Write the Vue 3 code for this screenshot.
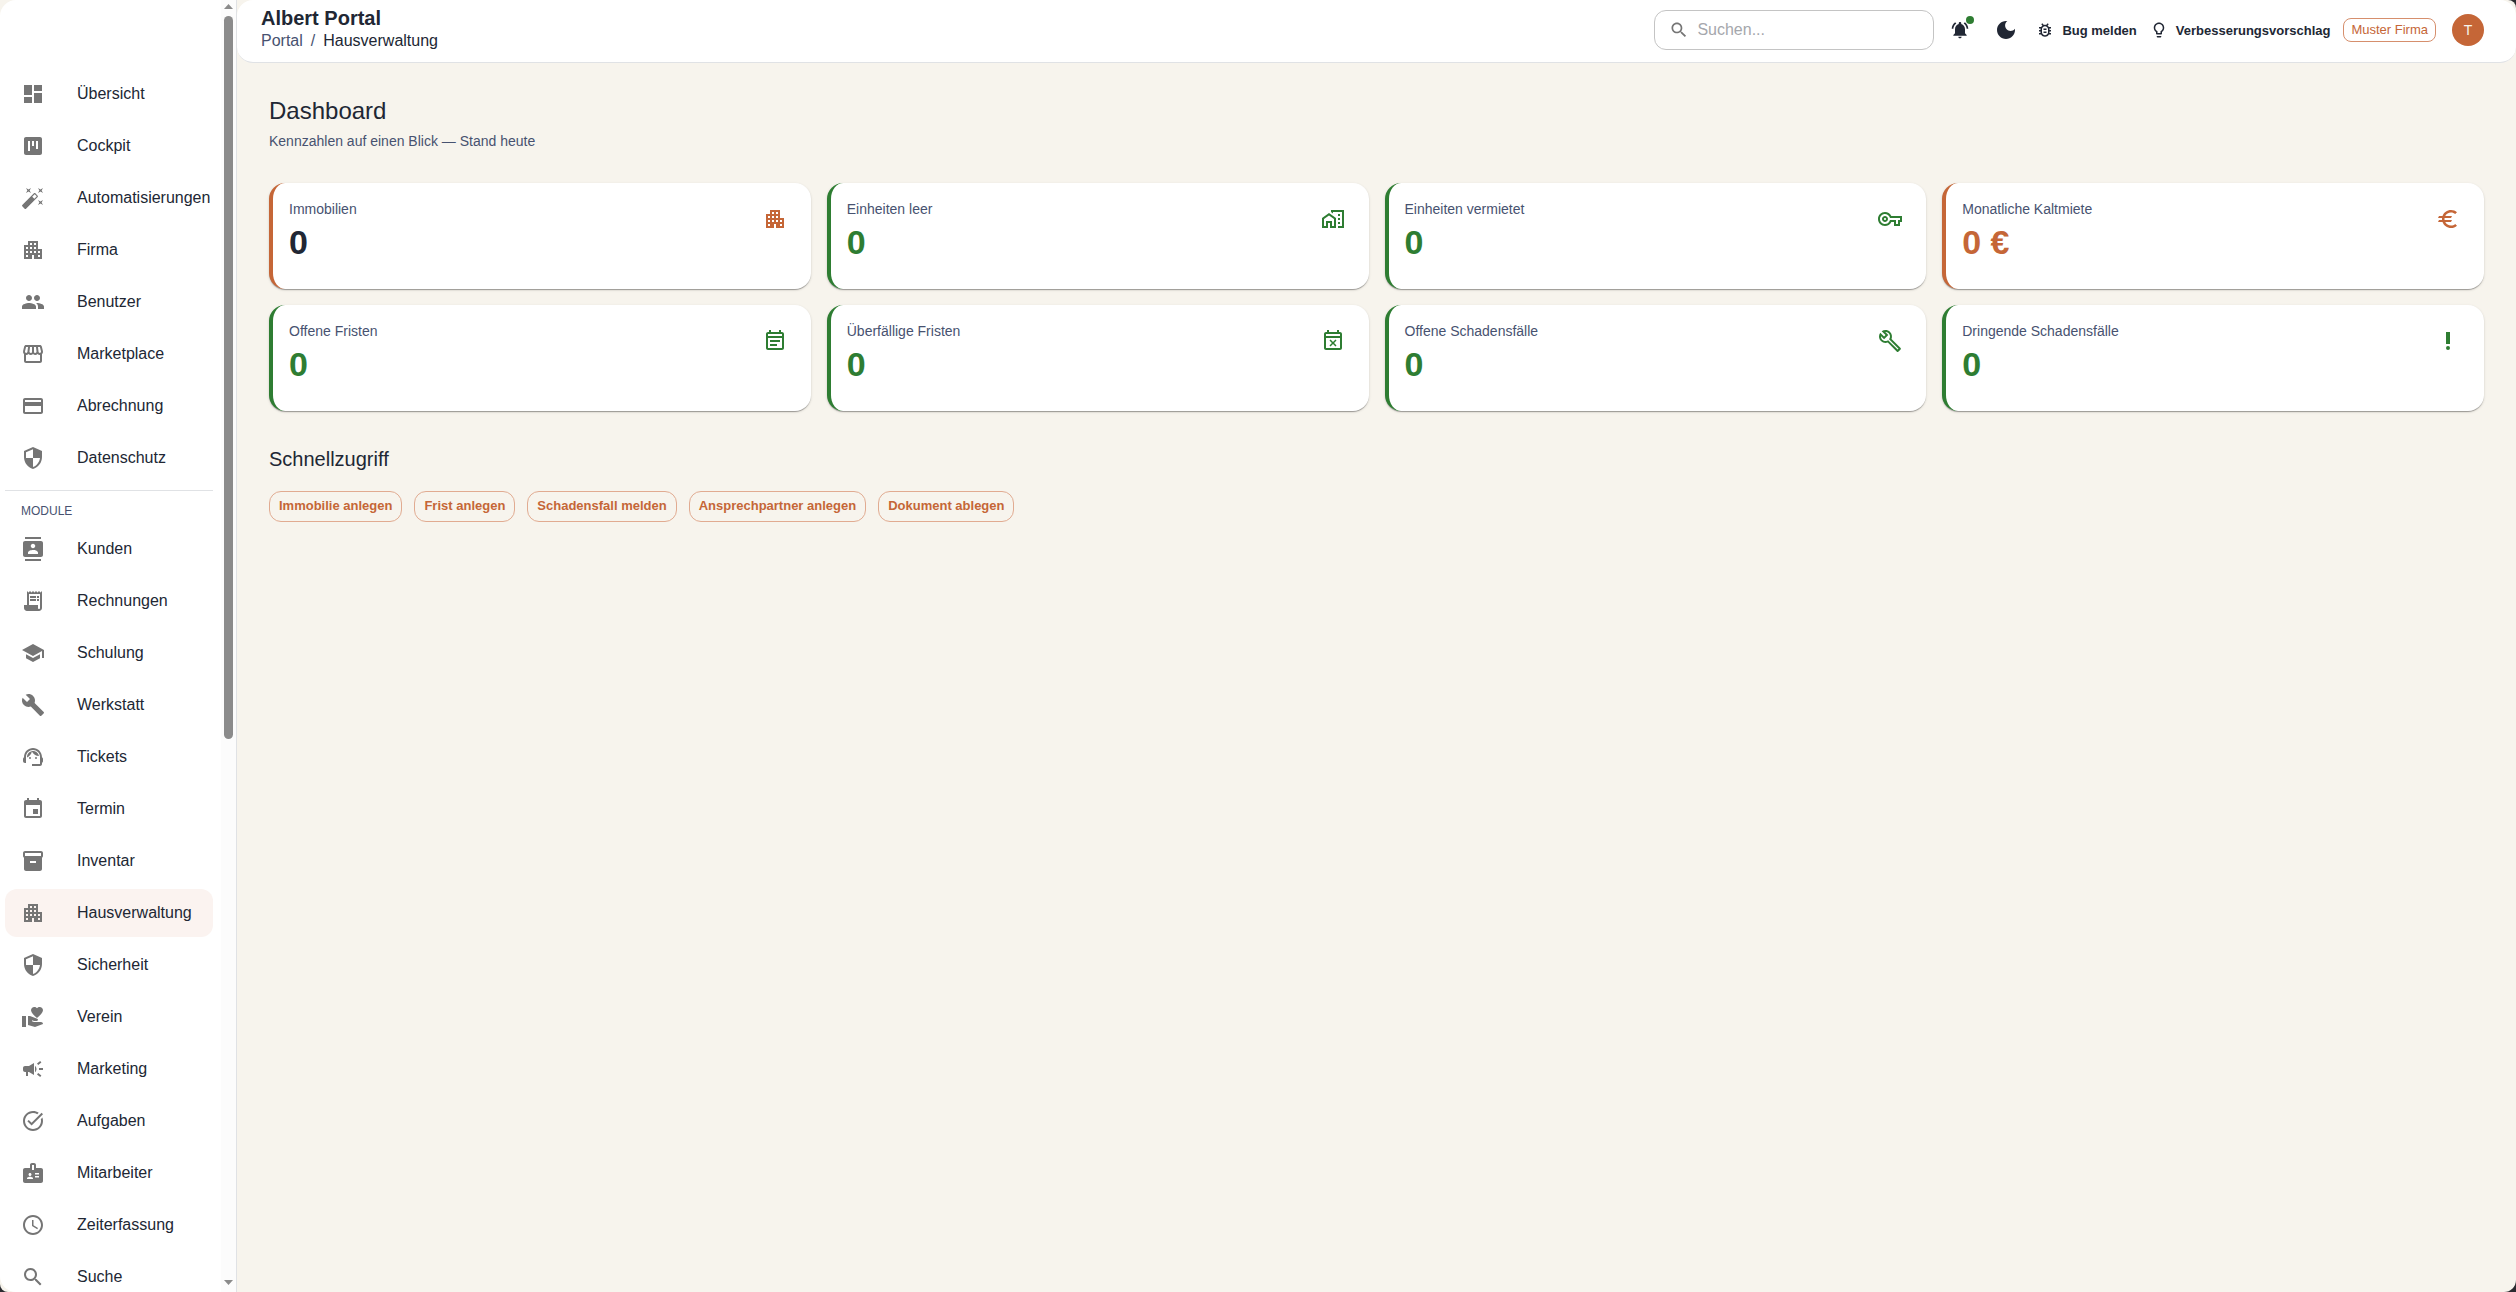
<script setup>
import { ref } from 'vue';

const icons = {
    dashboard: 'M3 13h8V3H3v10zm0 8h8v-6H3v6zm10 0h8V11h-8v10zm0-18v6h8V3h-8z',
    cockpit: 'M19 3H5c-1.1 0-2 .9-2 2v14c0 1.1.9 2 2 2h14c1.1 0 2-.9 2-2V5c0-1.1-.9-2-2-2zM9 17H7V7h2v10zm4-5h-2V7h2v5zm4 3h-2V7h2v8z',
    wand: 'M7.5 5.6 10 7 8.6 4.5 10 2 7.5 3.4 5 2l1.4 2.5L5 7zm12 9.8L17 14l1.4 2.5L17 19l2.5-1.4L22 19l-1.4-2.5L22 14zM22 2l-2.5 1.4L17 2l1.4 2.5L17 7l2.5-1.4L22 7l-1.4-2.5zm-7.63 5.29c-.39-.39-1.02-.39-1.41 0L1.29 18.96c-.39.39-.39 1.02 0 1.41l2.34 2.34c.39.39 1.02.39 1.41 0L16.7 11.05c.39-.39.39-1.02 0-1.41l-2.33-2.35zm-1.03 5.49-2.12-2.12 2.44-2.44 2.12 2.12-2.44 2.44z',
    building: 'M17 11V3H7v4H3v14h8v-4h2v4h8V11h-4zM7 19H5v-2h2v2zm0-4H5v-2h2v2zm0-4H5V9h2v2zm4 4H9v-2h2v2zm0-4H9V9h2v2zm0-4H9V5h2v2zm4 8h-2v-2h2v2zm0-4h-2V9h2v2zm0-4h-2V5h2v2zm4 12h-2v-2h2v2zm0-4h-2v-2h2v2z',
    people: 'M16 11c1.66 0 2.99-1.34 2.99-3S17.66 5 16 5s-3 1.34-3 3 1.34 3 3 3zm-8 0c1.66 0 2.99-1.34 2.99-3S9.66 5 8 5 5 6.34 5 8s1.34 3 3 3zm0 2c-2.33 0-7 1.17-7 3.5V19h14v-2.5c0-2.33-4.67-3.5-7-3.5zm8 0c-.29 0-.62.02-.97.05 1.16.84 1.97 1.97 1.97 3.45V19h6v-2.5c0-2.33-4.67-3.5-7-3.5z',
    store: 'M21.9 8.89l-1.05-4.37c-.22-.9-1-1.52-1.91-1.52H5.05c-.9 0-1.69.63-1.9 1.52L2.1 8.89c-.24 1.02-.02 2.06.62 2.88.08.11.19.19.28.29V19c0 1.1.9 2 2 2h14c1.1 0 2-.9 2-2v-6.94c.09-.09.2-.18.28-.28.64-.82.87-1.87.62-2.89zm-2.99-3.9 1.05 4.37c.1.42.01.84-.25 1.17-.14.18-.44.47-.94.47-.61 0-1.14-.49-1.21-1.14L16.98 5l1.93-.01zM13 5h1.96l.54 4.52c.05.39-.07.78-.33 1.07-.22.26-.54.41-.95.41-.67 0-1.22-.59-1.22-1.31V5zM8.49 9.52 9.04 5H11v4.69c0 .72-.55 1.31-1.29 1.31-.34 0-.65-.15-.89-.41-.25-.29-.37-.68-.33-1.07zm-4.45-.16L5.05 5h1.97l-.58 4.86c-.08.65-.6 1.14-1.21 1.14-.49 0-.8-.29-.93-.47-.27-.32-.36-.75-.26-1.17zM5 19v-6.03c.08.01.15.03.23.03.87 0 1.66-.36 2.24-.95.6.6 1.4.95 2.31.95.87 0 1.65-.36 2.23-.93.59.57 1.39.93 2.29.93.84 0 1.64-.35 2.24-.95.58.59 1.37.95 2.24.95.08 0 .15-.02.23-.03V19H5z',
    card: 'M20 4H4c-1.11 0-1.99.89-1.99 2L2 18c0 1.11.89 2 2 2h16c1.11 0 2-.89 2-2V6c0-1.11-.89-2-2-2zm0 14H4v-6h16v6zm0-10H4V6h16v2z',
    shield: 'M12 1 3 5v6c0 5.55 3.84 10.74 9 12 5.16-1.26 9-6.45 9-12V5l-9-4zm0 10.99h7c-.53 4.12-3.28 7.79-7 8.94V12H5V6.3l7-3.11v8.8z',
    contacts: 'M20 0H4v2h16V0zM4 24h16v-2H4v2zM20 4H4c-1.1 0-2 .9-2 2v12c0 1.1.9 2 2 2h16c1.1 0 2-.9 2-2V6c0-1.1-.9-2-2-2zm-8 2.75c1.24 0 2.25 1.01 2.25 2.25s-1.01 2.25-2.25 2.25S9.75 10.24 9.75 9 10.76 6.75 12 6.75zM17 17H7v-1.5c0-1.67 3.33-2.5 5-2.5s5 .83 5 2.5V17z',
    receipt: 'M19.5 3.5 18 2l-1.5 1.5L15 2l-1.5 1.5L12 2l-1.5 1.5L9 2 7.5 3.5 6 2v14H3v3c0 1.66 1.34 3 3 3h12c1.66 0 3-1.34 3-3V2l-1.5 1.5zM19 19c0 .55-.45 1-1 1s-1-.45-1-1v-3H8V5h11v14zM9 7h6v2H9zm7 0h2v2h-2zm-7 3h6v2H9zm7 0h2v2h-2z',
    school: 'M5 13.18v4L12 21l7-3.82v-4L12 17l-7-3.82zM12 3 1 9l11 6 9-4.91V17h2V9L12 3z',
    wrench: 'm22.7 19-9.1-9.1c.9-2.3.4-5-1.5-6.9-2-2-5-2.4-7.4-1.3L9 6 6 9 1.6 4.7C.4 7.1.9 10.1 2.9 12.1c1.9 1.9 4.6 2.4 6.9 1.5l9.1 9.1c.4.4 1 .4 1.4 0l2.3-2.3c.5-.4.5-1.1.1-1.4z',
    support: 'M21 12.22C21 6.73 16.74 3 12 3c-4.69 0-9 3.65-9 9.28-.6.34-1 .98-1 1.72v2c0 1.1.9 2 2 2h1v-6.1c0-3.87 3.13-7 7-7s7 3.13 7 7V19h-8v2h8c1.1 0 2-.9 2-2v-1.22c.59-.31 1-.92 1-1.64v-2.3c0-.7-.41-1.31-1-1.62z M9 12a1 1 0 1 0 0 2 1 1 0 0 0 0-2z M15 12a1 1 0 1 0 0 2 1 1 0 0 0 0-2z M18 11.03C17.52 8.18 15.04 6 12.05 6c-3.03 0-6.29 2.51-6.03 6.45 2.47-1.01 4.33-3.21 4.86-5.89 1.31 2.63 4 4.44 7.12 4.47z',
    event: 'M17 12h-5v5h5v-5zM16 1v2H8V1H6v2H5c-1.11 0-1.99.9-1.99 2L3 19c0 1.1.89 2 2 2h14c1.1 0 2-.9 2-2V5c0-1.1-.9-2-2-2h-1V1h-2zm3 18H5V8h14v11z',
    inventory: 'M20 2H4c-1 0-2 .9-2 2v3.01c0 .72.43 1.34 1 1.69V20c0 1.1 1.1 2 2 2h14c.9 0 2-.9 2-2V8.7c.57-.35 1-.97 1-1.69V4c0-1.1-1-2-2-2zm-5 12H9v-2h6v2zm5-7H4V4h16v3z',
    volunteer: 'M1 11h4v11H1z M16 3.25C16.65 2.49 17.66 2 18.7 2 20.55 2 22 3.45 22 5.3c0 2.27-2.91 4.9-6 7.7-3.09-2.81-6-5.44-6-7.7C10 3.45 11.45 2 13.3 2c1.04 0 2.05.49 2.7 1.25z M20 17h-7l-2.09-.73.33-.94L13 16h2.82c.65 0 1.18-.53 1.18-1.18 0-.49-.31-.93-.77-1.11L8.97 11H7v9.02L14 22l8.01-3c-.01-1.1-.9-2-2.01-2z',
    campaign: 'M18 11v2h4v-2h-4zm-2 6.61c.96.71 2.21 1.65 3.2 2.39.4-.53.8-1.07 1.2-1.6-.99-.74-2.24-1.68-3.2-2.4-.4.54-.8 1.08-1.2 1.61zM20.4 5.6c-.4-.53-.8-1.07-1.2-1.6-.99.74-2.24 1.68-3.2 2.4.4.53.8 1.07 1.2 1.6.96-.72 2.21-1.65 3.2-2.4zM4 9c-1.1 0-2 .9-2 2v2c0 1.1.9 2 2 2h1v4h2v-4h1l5 3V6L8 9H4zm11.5 3c0-1.33-.58-2.53-1.5-3.35v6.69c.92-.81 1.5-2.01 1.5-3.34z',
    task: 'M22 5.18 10.59 16.6l-4.24-4.24 1.41-1.41 2.83 2.83 10-10L22 5.18zm-2.21 5.04c.13.57.21 1.17.21 1.78 0 4.42-3.58 8-8 8s-8-3.58-8-8 3.58-8 8-8c1.58 0 3.04.46 4.28 1.25l1.44-1.44C16.1 2.67 14.13 2 12 2 6.48 2 2 6.48 2 12s4.48 10 10 10 10-4.48 10-10c0-1.19-.22-2.33-.6-3.39l-1.61 1.61z',
    badge: 'M20 7h-5V4c0-1.1-.9-2-2-2h-2c-1.1 0-2 .9-2 2v3H4c-1.1 0-2 .9-2 2v11c0 1.1.9 2 2 2h16c1.1 0 2-.9 2-2V9c0-1.1-.9-2-2-2zM9 12c.83 0 1.5.67 1.5 1.5S9.83 15 9 15s-1.5-.67-1.5-1.5S8.17 12 9 12zm3 6H6v-.75c0-1 2-1.5 3-1.5s3 .5 3 1.5V18zm1-9h-2V4h2v5zm5 7.5h-4V15h4v1.5zm0-3h-4V12h4v1.5z',
    clock: 'M11.99 2C6.47 2 2 6.48 2 12s4.47 10 9.99 10C17.52 22 22 17.52 22 12S17.52 2 11.99 2zM12 20c-4.42 0-8-3.58-8-8s3.58-8 8-8 8 3.58 8 8-3.58 8-8 8zm.5-13H11v6l5.25 3.15.75-1.23-4.5-2.67z',
    search: 'M15.5 14h-.79l-.28-.27C15.41 12.59 16 11.11 16 9.5 16 5.91 13.09 3 9.5 3S3 5.91 3 9.5 5.91 16 9.5 16c1.61 0 3.09-.59 4.23-1.57l.27.28v.79l5 4.99L20.49 19l-4.99-5zm-6 0C7.01 14 5 11.99 5 9.5S7.01 5 9.5 5 14 7.01 14 9.5 11.99 14 9.5 14z',
    bell: 'M7.58 4.08 6.15 2.65C3.75 4.48 2.17 7.3 2.03 10.5h2c.15-2.65 1.51-4.97 3.55-6.42zm12.39 6.42h2c-.15-3.2-1.73-6.02-4.12-7.85l-1.42 1.43c2.02 1.45 3.39 3.77 3.54 6.42zM18 11c0-3.07-1.64-5.64-4.5-6.32V4c0-.83-.67-1.5-1.5-1.5s-1.5.67-1.5 1.5v.68C7.63 5.36 6 7.92 6 11v5l-2 2v1h16v-1l-2-2v-5zm-6 11c.14 0 .27-.01.4-.04.65-.14 1.18-.58 1.44-1.18.1-.24.15-.5.15-.78h-4c.01 1.1.9 2 2.01 2z',
    moon: 'M12 3c-4.97 0-9 4.03-9 9s4.03 9 9 9 9-4.03 9-9c0-.46-.04-.92-.1-1.36-.98 1.37-2.58 2.26-4.4 2.26-2.98 0-5.4-2.42-5.4-5.4 0-1.81.89-3.42 2.26-4.4-.44-.06-.9-.1-1.36-.1z',
    bug: 'M20 8h-2.81c-.45-.78-1.07-1.45-1.82-1.96L17 4.41 15.59 3l-2.17 2.17C12.96 5.06 12.49 5 12 5s-.96.06-1.41.17L8.41 3 7 4.41l1.62 1.63C7.88 6.55 7.26 7.22 6.81 8H4v2h2.09c-.05.33-.09.66-.09 1v1H4v2h2v1c0 .34.04.67.09 1H4v2h2.81c1.04 1.79 2.97 3 5.19 3s4.15-1.21 5.19-3H20v-2h-2.09c.05-.33.09-.66.09-1v-1h2v-2h-2v-1c0-.34-.04-.67-.09-1H20V8zm-4 7c0 2.21-1.79 4-4 4s-4-1.79-4-4v-4c0-2.21 1.79-4 4-4s4 1.79 4 4v4zm-6-1h4v2h-4zm0-4h4v2h-4z',
    bulb: 'M9 21c0 .55.45 1 1 1h4c.55 0 1-.45 1-1v-1H9v1zm3-19C8.14 2 5 5.14 5 9c0 2.38 1.19 4.47 3 5.74V17c0 .55.45 1 1 1h6c.55 0 1-.45 1-1v-2.26c1.81-1.27 3-3.36 3-5.74 0-3.86-3.14-7-7-7zm2.85 11.1-.85.6V16h-4v-2.3l-.85-.6C7.8 12.16 7 10.63 7 9c0-2.76 2.24-5 5-5s5 2.24 5 5c0 1.63-.8 3.16-2.15 4.1z',
    homework: 'M1 11v10h6v-5h2v5h6V11L8 6l-7 5zm12 8h-2v-5H5v5H3v-7l5-3.5 5 3.5v7z M17 7h2v2h-2V7z M17 11h2v2h-2v-2z M17 15h2v2h-2v-2z M10 3v1.97l2 1.43V5h9v14h-4v2h6V3H10z',
    key: 'M22 19h-6v-4h-2.68c-1.14 2.42-3.6 4-6.32 4-3.86 0-7-3.14-7-7s3.14-7 7-7c2.72 0 5.17 1.58 6.32 4H24v6h-2v4zm-4-2h2v-4h2v-2H11.94l-.23-.67C11.01 8.34 9.11 7 7 7c-2.76 0-5 2.24-5 5s2.24 5 5 5c2.11 0 4.01-1.34 4.71-3.33l.23-.67H18v4zM7 15c-1.65 0-3-1.35-3-3s1.35-3 3-3 3 1.35 3 3-1.35 3-3 3zm0-4c-.55 0-1 .45-1 1s.45 1 1 1 1-.45 1-1-.45-1-1-1z',
    euro: 'M15 18.5c-2.51 0-4.68-1.42-5.76-3.5H15l1-2H8.58c-.05-.33-.08-.66-.08-1s.03-.67.08-1H15l1-2H9.24C10.32 6.92 12.5 5.5 15 5.5c1.61 0 3.09.59 4.23 1.57L21 5.3C19.41 3.87 17.3 3 15 3c-3.92 0-7.24 2.51-8.48 6H3l-1 2h4.06c-.04.33-.06.66-.06 1s.02.67.06 1H3l-1 2h4.52c1.24 3.49 4.56 6 8.48 6 2.31 0 4.41-.87 6-2.3l-1.78-1.77c-1.13.98-2.6 1.57-4.22 1.57z',
    note: 'M19 3h-1V1h-2v2H8V1H6v2H5c-1.11 0-1.99.9-1.99 2L3 19c0 1.1.89 2 2 2h14c1.1 0 2-.9 2-2V5c0-1.1-.9-2-2-2zm0 16H5V9h14v10zm0-12H5V5h14v2zM7 11h10v2H7v-2zm0 4h7v2H7v-2z',
    busy: 'M9.56 17.5 12 15.06l2.44 2.44 1.06-1.06L13.06 14l2.44-2.44-1.06-1.06L12 12.94 9.56 10.5 8.5 11.56 10.94 14 8.5 16.44zM19 3h-1V1h-2v2H8V1H6v2H5c-1.11 0-1.99.9-1.99 2L3 19c0 1.1.89 2 2 2h14c1.1 0 2-.9 2-2V5c0-1.1-.9-2-2-2zm0 16H5V9h14v10zm0-12H5V5h14v2z',
    build: 'm22.61 18.99-9.08-9.08c.93-2.34.45-5.1-1.44-7C9.79.61 6.21.4 3.66 2.26L7.5 6.11 6.08 7.52 2.25 3.69C.39 6.23.6 9.82 2.9 12.11c1.86 1.86 4.57 2.35 6.89 1.48l9.11 9.11c.39.39 1.02.39 1.41 0l2.3-2.3c.4-.38.4-1.01 0-1.41zm-3 1.6-9.46-9.46c-.61.45-1.29.72-2 .82-1.36.2-2.79-.21-3.83-1.25C3.37 9.76 2.93 8.5 3 7.26l3.09 3.09 4.24-4.24-3.09-3.09c1.24-.07 2.49.37 3.44 1.31 1.08 1.08 1.49 2.57 1.24 3.96-.12.71-.42 1.37-.88 1.96l9.45 9.45-.88.89z',
    priority: 'M10 3h4v12h-4z M12 17a2 2 0 1 0 0 4 2 2 0 0 0 0-4z',
};

const mainMenu = [
    { label: 'Übersicht', icon: 'dashboard' },
    { label: 'Cockpit', icon: 'cockpit' },
    { label: 'Automatisierungen', icon: 'wand' },
    { label: 'Firma', icon: 'building' },
    { label: 'Benutzer', icon: 'people' },
    { label: 'Marketplace', icon: 'store' },
    { label: 'Abrechnung', icon: 'card' },
    { label: 'Datenschutz', icon: 'shield' },
];

const modules = [
    { label: 'Kunden', icon: 'contacts' },
    { label: 'Rechnungen', icon: 'receipt' },
    { label: 'Schulung', icon: 'school' },
    { label: 'Werkstatt', icon: 'wrench' },
    { label: 'Tickets', icon: 'support' },
    { label: 'Termin', icon: 'event' },
    { label: 'Inventar', icon: 'inventory' },
    { label: 'Hausverwaltung', icon: 'building', active: true },
    { label: 'Sicherheit', icon: 'shield' },
    { label: 'Verein', icon: 'volunteer' },
    { label: 'Marketing', icon: 'campaign' },
    { label: 'Aufgaben', icon: 'task' },
    { label: 'Mitarbeiter', icon: 'badge' },
    { label: 'Zeiterfassung', icon: 'clock' },
    { label: 'Suche', icon: 'search' },
];

const stats = [
    { label: 'Immobilien', value: '0', icon: 'building', tone: 'primary', plain: true },
    { label: 'Einheiten leer', value: '0', icon: 'homework', tone: 'success' },
    { label: 'Einheiten vermietet', value: '0', icon: 'key', tone: 'success' },
    { label: 'Monatliche Kaltmiete', value: '0 €', icon: 'euro', tone: 'primary' },
    { label: 'Offene Fristen', value: '0', icon: 'note', tone: 'success' },
    { label: 'Überfällige Fristen', value: '0', icon: 'busy', tone: 'success' },
    { label: 'Offene Schadensfälle', value: '0', icon: 'build', tone: 'success' },
    { label: 'Dringende Schadensfälle', value: '0', icon: 'priority', tone: 'success' },
];

const actions = ['Immobilie anlegen', 'Frist anlegen', 'Schadensfall melden', 'Ansprechpartner anlegen', 'Dokument ablegen'];

const query = ref('');
</script>
<template>
    <div class="layout">
        <aside class="sidebar">
            <nav class="menu">
                <a v-for="item in mainMenu" :key="item.label" href="#" class="menu-item">
                    <svg class="icon" viewBox="0 0 24 24"><path :d="icons[item.icon]" /></svg>
                    <span>{{ item.label }}</span>
                </a>
                <hr class="menu-divider">
                <div class="menu-caption">MODULE</div>
                <a v-for="item in modules" :key="item.label" href="#" class="menu-item" :class="{ active: item.active }">
                    <svg class="icon" viewBox="0 0 24 24"><path :d="icons[item.icon]" /></svg>
                    <span>{{ item.label }}</span>
                </a>
            </nav>
            <div class="scrollbar" aria-hidden="true">
                <svg class="scrollbar-arrow" viewBox="0 0 15 16"><path d="M3 9 7.500 4 12 9z" /></svg>
                <div class="scrollbar-thumb"></div>
                <div class="scrollbar-rest"></div>
                <svg class="scrollbar-arrow" viewBox="0 0 15 16"><path d="M3 4 7.500 9 12 4z" /></svg>
            </div>
        </aside>
        <div class="content">
            <header class="topbar">
                <div class="brand">
                    <div class="brand-name">Albert Portal</div>
                    <nav class="breadcrumbs">
                        <a href="#">Portal</a>
                        <span>/</span>
                        <span class="current">Hausverwaltung</span>
                    </nav>
                </div>
                <label class="search">
                    <svg class="icon icon-md" viewBox="0 0 24 24"><path :d="icons.search" /></svg>
                    <input v-model="query" type="text" placeholder="Suchen..." aria-label="Suchen">
                </label>
                <div class="tools">
                    <button type="button" class="icon-button" aria-label="Benachrichtigungen">
                        <svg class="icon icon-md" viewBox="0 0 24 24"><path :d="icons.bell" /></svg>
                        <span class="dot"></span>
                    </button>
                    <button type="button" class="icon-button" aria-label="Dunkelmodus">
                        <svg class="icon" viewBox="0 0 24 24"><path :d="icons.moon" /></svg>
                    </button>
                </div>
                <div class="links">
                    <button type="button" class="text-button">
                        <svg class="icon icon-sm" viewBox="0 0 24 24"><path :d="icons.bug" /></svg>
                        Bug melden
                    </button>
                    <button type="button" class="text-button">
                        <svg class="icon icon-sm" viewBox="0 0 24 24"><path :d="icons.bulb" /></svg>
                        Verbesserungsvorschlag
                    </button>
                </div>
                <span class="chip">Muster Firma</span>
                <button type="button" class="avatar">T</button>
            </header>
            <main class="page">
                <h1>Dashboard</h1>
                <p class="subtitle">Kennzahlen auf einen Blick — Stand heute</p>
                <section class="stats">
                    <article v-for="stat in stats" :key="stat.label" class="stat" :class="[stat.tone, { plain: stat.plain }]">
                        <div>
                            <div class="stat-label">{{ stat.label }}</div>
                            <div class="stat-value">{{ stat.value }}</div>
                        </div>
                        <svg class="icon stat-icon" viewBox="0 0 24 24"><path :d="icons[stat.icon]" /></svg>
                    </article>
                </section>
                <h2>Schnellzugriff</h2>
                <div class="actions">
                    <button v-for="action in actions" :key="action" type="button" class="action">{{ action }}</button>
                </div>
            </main>
        </div>
    </div>
</template>
<style>
html {
    background-color: #2b2b30;
}
</style>
<style scoped>
.layout {
    --text: #212734;
    --muted: #475270;
    --primary: #c56637;
    --success: #2e7d32;
    --line: #e0e2e5;
    display: flex;
    height: 100vh;
    overflow: hidden;
    background-color: #f7f4ed;
    border-radius: 0 8px 12px 8px;
    color: var(--text);
    font-family: "Liberation Sans", Arial, sans-serif;
    font-size: 16px;
    line-height: 24px;
}
.layout * {
    box-sizing: border-box;
}
button {
    font-family: inherit;
    color: inherit;
    background: none;
    border: 0;
    padding: 0;
    cursor: pointer;
}
a {
    color: inherit;
    text-decoration: none;
}
.icon {
    width: 24px;
    height: 24px;
    flex-shrink: 0;
    fill: currentColor;
}
.icon-md {
    width: 20px;
    height: 20px;
}
.icon-sm {
    width: 18px;
    height: 18px;
}

.sidebar {
    display: flex;
    width: 237px;
    flex-shrink: 0;
    overflow: hidden;
    background-color: #fff;
    border-right: 1px solid var(--line);
    border-radius: 16px 0 0 16px;
}
.menu {
    flex: 1;
    min-width: 0;
    padding: 70px 8px 0 5px;
}
.menu-item {
    display: flex;
    align-items: center;
    gap: 32px;
    height: 48px;
    margin-bottom: 4px;
    padding: 0 16px;
    border-radius: 12px;
    white-space: nowrap;
}
.menu-item .icon {
    color: #757575;
}
.menu-item.active {
    background-color: #fbf3f0;
}
.menu-divider {
    margin: 8px 0;
    border: 0;
    border-top: 1px solid var(--line);
}
.menu-caption {
    padding: 0 16px;
    margin-bottom: 2px;
    color: var(--muted);
    font-size: 12px;
}
.scrollbar {
    display: flex;
    flex-direction: column;
    width: 15px;
    background-color: #fcfcfc;
}
.scrollbar-arrow {
    height: 16px;
    fill: #8b8b8b;
}
.scrollbar-thumb {
    flex: 723;
    margin: 0 3px;
    border-radius: 5px;
    background-color: #8b8b8b;
}
.scrollbar-rest {
    flex: 537;
}

.content {
    flex: 1;
    min-width: 0;
}
.topbar {
    display: flex;
    align-items: center;
    height: 63px;
    padding: 0 32px 2px 24px;
    background-color: #fff;
    border-bottom: 1px solid var(--line);
    border-radius: 16px;
}
.brand {
    flex: 1;
}
.brand-name {
    font-size: 20px;
    font-weight: 700;
    line-height: 22px;
}
.breadcrumbs {
    display: flex;
    gap: 8px;
    color: var(--muted);
}
.breadcrumbs .current {
    color: var(--text);
}
.search {
    display: flex;
    align-items: center;
    gap: 8px;
    width: 280px;
    height: 40px;
    padding: 0 14px;
    border: 1px solid #c4c4c4;
    border-radius: 12px;
}
.search .icon {
    color: #757575;
}
.search input {
    flex: 1;
    min-width: 0;
    padding: 0;
    border: 0;
    outline: 0;
    background: none;
    color: inherit;
    font: inherit;
}
.search input::placeholder {
    color: #a5a7ac;
    opacity: 1;
}
.tools {
    display: flex;
    align-items: center;
    gap: 24px;
    margin: 0 18px 0 16px;
}
.icon-button {
    position: relative;
    display: flex;
}
.dot {
    position: absolute;
    top: -4px;
    right: -4px;
    width: 8px;
    height: 8px;
    border-radius: 50%;
    background-color: var(--success);
}
.links {
    display: flex;
    gap: 13px;
}
.text-button {
    display: flex;
    align-items: center;
    gap: 8px;
    font-size: 13px;
    font-weight: 700;
}
.chip {
    height: 24px;
    margin: 0 16px 0 13px;
    padding: 0 7px;
    border: 1px solid #d68f6d;
    border-radius: 8px;
    color: var(--primary);
    font-size: 13px;
    line-height: 22px;
}
.avatar {
    width: 32px;
    height: 32px;
    border-radius: 50%;
    background-color: var(--primary);
    color: #f7f4ed;
    font-size: 14px;
}

.page {
    padding: 32px;
}
h1 {
    margin: 0 0 4px;
    font-size: 24px;
    font-weight: 400;
    line-height: 32px;
}
.subtitle {
    margin: 0 0 32px;
    color: var(--muted);
    font-size: 14px;
    line-height: 20px;
}
.stats {
    display: grid;
    grid-template-columns: repeat(4, 1fr);
    gap: 16px;
}
.stat {
    --tone: var(--success);
    display: flex;
    justify-content: space-between;
    padding: 16px 16px 24px;
    background-color: #fff;
    border-left: 4px solid var(--tone);
    border-radius: 16px;
    box-shadow: 0 2px 1px -1px rgba(0, 0, 0, 0.2), 0 1px 1px rgba(0, 0, 0, 0.14), 0 1px 3px rgba(0, 0, 0, 0.12);
}
.stat.primary {
    --tone: var(--primary);
}
.stat-label {
    color: var(--muted);
    font-size: 14px;
    line-height: 20px;
}
.stat-value {
    margin: 2px 0;
    color: var(--tone);
    font-size: 34px;
    font-weight: 700;
    line-height: 42px;
}
.stat.plain .stat-value {
    color: var(--text);
}
.stat-icon {
    margin: 8px;
    color: var(--tone);
}
h2 {
    margin: 32px 0 16px;
    font-size: 20px;
    font-weight: 400;
    line-height: 32px;
}
.actions {
    display: flex;
    flex-wrap: wrap;
    gap: 12px;
}
.action {
    padding: 4px 9px 6px;
    border: 1px solid #e1ab91;
    border-radius: 12px;
    color: var(--primary);
    font-size: 13px;
    font-weight: 700;
    line-height: 19px;
}
</style>
